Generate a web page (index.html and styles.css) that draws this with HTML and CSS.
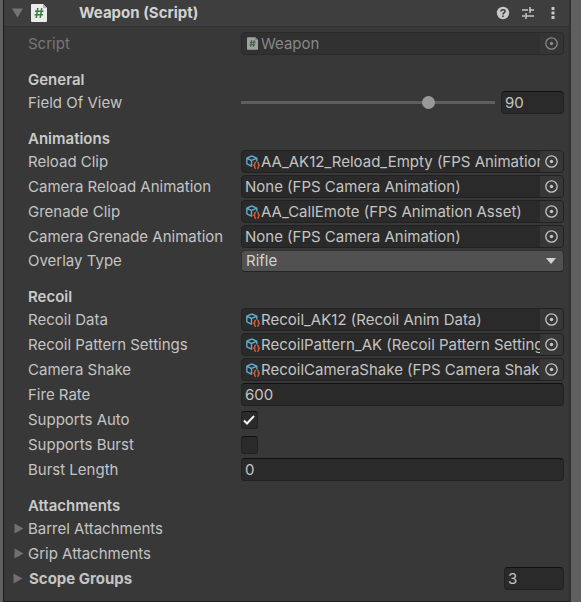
FILE: index.html
```html
<!DOCTYPE html>
<html lang="en">
<head>
<meta charset="utf-8">
<title>Weapon (Script)</title>
<link rel="stylesheet" href="styles.css">
</head>
<body>
<svg class="defs" aria-hidden="true">
  <symbol id="script-icon" viewBox="0 0 16 18">
    <path d="M1 0H12L16 4V17Q16 18 15 18H1Q0 18 0 17V1Q0 0 1 0Z" fill="#ececec"/>
    <path d="M12 0V4H16Z" fill="#b4b4b4"/>
    <path d="M6.800 4L5.300 14M10.700 4L9.200 14M4 7.200H12.500M3.500 10.800H12" fill="none" stroke="#3b7c3e" stroke-width="1.500"/>
  </symbol>
  <symbol id="asset-icon" viewBox="0 0 14 14">
    <path d="M5.800 1L10.800 3.200V6.500M5.800 1L.8 3.200V8.800L5.500 11.200V5.500L.8 3.200M5.500 5.500L10.800 3.200" fill="none" stroke="#5fa9cb" stroke-width="1.400" stroke-linejoin="round"/>
    <path d="M10 7.200Q8.700 7.200 8.700 8.500V9.400L7.700 10.200L8.700 11V12Q8.700 13.300 10 13.300M11.200 7.200Q12.500 7.200 12.500 8.500V9.400L13.400 10.200L12.500 11V12Q12.500 13.300 11.200 13.300" fill="none" stroke="#d6572f" stroke-width="1.500"/>
  </symbol>
  <symbol id="pick-icon" viewBox="0 0 14 14">
    <circle cx="6.500" cy="6.500" r="5.700" fill="none" stroke="currentColor" stroke-width="1.300"/>
    <circle cx="6.500" cy="6.500" r="1.700" fill="currentColor"/>
  </symbol>
  <symbol id="arrow-right" viewBox="0 0 10 12"><path d="M.5 .5L9.500 5.500L.5 10.500Z" fill="currentColor"/></symbol>
</svg>

<main class="inspector">
  <header class="component-header">
    <button class="icon-button fold" aria-label="Collapse component"><svg width="12" height="10" viewBox="0 0 12 10"><path d="M0 .5H11L5.500 9.500Z" fill="currentColor"/></svg></button>
    <svg class="script-logo" width="16" height="18"><use href="#script-icon"/></svg>
    <h1>Weapon (Script)</h1>
    <div class="header-actions">
      <button class="icon-button" aria-label="Help"><svg width="14" height="14" viewBox="0 0 14 14"><circle cx="7" cy="7" r="6.200" fill="currentColor"/><path d="M5 5.500Q5 3.700 7 3.700Q9 3.700 9 5.300Q9 6.200 8 6.800Q7 7.300 7 8.500M7 9.500V11" fill="none" stroke="#3e3e3e" stroke-width="1.600"/></svg></button>
      <button class="icon-button" aria-label="Presets"><svg width="14" height="14" viewBox="0 0 14 14"><path d="M1 4H7M8 4H13M9 1V7M1 10H4M5 10H13M5 7V13" fill="none" stroke="currentColor" stroke-width="1.500"/></svg></button>
      <button class="icon-button" aria-label="More"><svg width="14" height="14" viewBox="0 0 14 14"><path d="M5.500 1H8.500V4H5.500ZM5.500 5.500H8.500V8.500H5.500ZM5.500 10H8.500V13H5.500Z" fill="currentColor"/></svg></button>
    </div>
  </header>

  <form class="properties">
    <section class="group">
      <div class="row disabled">
        <label for="script">Script</label>
        <div class="box object"><svg class="small-script" width="11" height="13"><use href="#script-icon"/></svg><input id="script" value="Weapon" disabled><button type="button" class="pick" disabled aria-label="Select script"><svg width="14" height="14"><use href="#pick-icon"/></svg></button></div>
      </div>
    </section>

    <section class="group">
      <h2>General</h2>
      <div class="row">
        <label for="fov">Field Of View</label>
        <div class="slider"><input id="fov" type="range" min="0" max="120" value="90"><input class="box number" aria-label="Field Of View value" value="90"></div>
      </div>
    </section>

    <section class="group">
      <h2>Animations</h2>
      <div class="row">
        <label for="reload">Reload Clip</label>
        <div class="box object"><svg class="asset" width="14" height="14"><use href="#asset-icon"/></svg><input id="reload" readonly value="AA_AK12_Reload_Empty (FPS Animation Asset)"><button type="button" class="pick" aria-label="Select reload clip"><svg width="14" height="14"><use href="#pick-icon"/></svg></button></div>
      </div>
      <div class="row">
        <label for="camera-reload">Camera Reload Animation</label>
        <div class="box object"><input id="camera-reload" readonly value="None (FPS Camera Animation)"><button type="button" class="pick" aria-label="Select camera reload animation"><svg width="14" height="14"><use href="#pick-icon"/></svg></button></div>
      </div>
      <div class="row">
        <label for="grenade">Grenade Clip</label>
        <div class="box object"><svg class="asset" width="14" height="14"><use href="#asset-icon"/></svg><input id="grenade" readonly value="AA_CallEmote (FPS Animation Asset)"><button type="button" class="pick" aria-label="Select grenade clip"><svg width="14" height="14"><use href="#pick-icon"/></svg></button></div>
      </div>
      <div class="row">
        <label for="camera-grenade">Camera Grenade Animation</label>
        <div class="box object"><input id="camera-grenade" readonly value="None (FPS Camera Animation)"><button type="button" class="pick" aria-label="Select camera grenade animation"><svg width="14" height="14"><use href="#pick-icon"/></svg></button></div>
      </div>
      <div class="row row-dropdown">
        <label for="overlay">Overlay Type</label>
        <div class="dropdown"><select id="overlay"><option>Rifle</option></select><svg width="10" height="6" viewBox="0 0 10 6" aria-hidden="true"><path d="M0 0H10L5 6Z" fill="currentColor"/></svg></div>
      </div>
    </section>

    <section class="group">
      <h2>Recoil</h2>
      <div class="row">
        <label for="recoil">Recoil Data</label>
        <div class="box object"><svg class="asset" width="14" height="14"><use href="#asset-icon"/></svg><input id="recoil" readonly value="Recoil_AK12 (Recoil Anim Data)"><button type="button" class="pick" aria-label="Select recoil data"><svg width="14" height="14"><use href="#pick-icon"/></svg></button></div>
      </div>
      <div class="row">
        <label for="pattern">Recoil Pattern Settings</label>
        <div class="box object"><svg class="asset" width="14" height="14"><use href="#asset-icon"/></svg><input id="pattern" readonly value="RecoilPattern_AK (Recoil Pattern Settings)"><button type="button" class="pick" aria-label="Select recoil pattern"><svg width="14" height="14"><use href="#pick-icon"/></svg></button></div>
      </div>
      <div class="row">
        <label for="shake">Camera Shake</label>
        <div class="box object"><svg class="asset" width="14" height="14"><use href="#asset-icon"/></svg><input id="shake" readonly value="RecoilCameraShake (FPS Camera Shake)"><button type="button" class="pick" aria-label="Select camera shake"><svg width="14" height="14"><use href="#pick-icon"/></svg></button></div>
      </div>
      <div class="row">
        <label for="rate">Fire Rate</label>
        <input class="box" id="rate" value="600">
      </div>
      <div class="row">
        <label for="auto">Supports Auto</label>
        <div class="check"><input id="auto" type="checkbox" checked><svg width="12" height="10" viewBox="0 0 12 10" aria-hidden="true"><path d="M1 5.500L4 8.500L11 1" fill="none" stroke="currentColor" stroke-width="2"/></svg></div>
      </div>
      <div class="row">
        <label for="burst">Supports Burst</label>
        <div class="check"><input id="burst" type="checkbox"><svg width="12" height="10" viewBox="0 0 12 10" aria-hidden="true"><path d="M1 5.500L4 8.500L11 1" fill="none" stroke="currentColor" stroke-width="2"/></svg></div>
      </div>
      <div class="row">
        <label for="length">Burst Length</label>
        <input class="box" id="length" value="0">
      </div>
    </section>

    <section class="group">
      <h2>Attachments</h2>
      <div class="foldout"><button type="button"><svg width="10" height="12"><use href="#arrow-right"/></svg>Barrel Attachments</button></div>
      <div class="foldout"><button type="button"><svg width="10" height="12"><use href="#arrow-right"/></svg>Grip Attachments</button></div>
      <div class="foldout strong"><button type="button"><svg width="10" height="12"><use href="#arrow-right"/></svg>Scope Groups</button><input class="box count" aria-label="Scope Groups size" value="3"></div>
    </section>
  </form>
</main>
</body>
</html>
```
FILE: styles.css
```css
* { box-sizing: border-box; }

body {
  margin: 0;
  background: #5f5f5f;
  color: #c4c4c4;
  font: 15px/22px Inter, "Liberation Sans", sans-serif;
}

.defs { position: absolute; width: 0; height: 0; }
svg { display: block; flex: none; }

input, select, button {
  margin: 0;
  padding: 0;
  border: 0;
  background: none;
  color: inherit;
  font: inherit;
}

h1, h2 { margin: 0; font-size: 15px; line-height: 22px; font-weight: 600; }

.inspector {
  margin: 0 10px 0 3px;
  background: #383838;
  border: solid #1d1d1d;
  border-width: 0 0 1px 1px;
  border-right: 2px solid #303030;
}

.component-header {
  display: flex;
  align-items: center;
  height: 27px;
  padding: 0 9px 0 8px;
  background: #3e3e3e;
  border-bottom: 1px solid #303030;
}
.component-header h1 { flex: 1; margin-left: 32px; color: #d2d2d2; font-weight: 700; }
.script-logo { margin-left: 7px; }
.icon-button { color: #c8c8c8; }
.fold { color: #747474; }
.header-actions { display: flex; gap: 11px; }

.properties { padding: 5px 5px 11px 8px; }
.group { display: flex; flex-direction: column; gap: 2px; }
.group + .group { margin-top: 14px; }
.group h2 { margin: 0 0 -2px 16px; color: #cacaca; }

.row {
  display: grid;
  grid-template-columns: 213px minmax(0, 1fr);
  align-items: center;
  height: 23px;
  padding-left: 16px;
}
.row label { white-space: nowrap; }
.row-dropdown { height: 22px; }

.box {
  width: 100%;
  height: 23px;
  padding: 0 3px;
  background: #2a2a2a;
  border: 1px solid #212121;
  border-top-color: #101010;
  border-radius: 4px;
}

.object {
  display: flex;
  align-items: center;
  padding-right: 0;
  border-top-color: #212121;
  overflow: hidden;
}
.object input { flex: 1; min-width: 0; height: 21px; }
.asset { margin: 0 1px; }
.small-script { margin: 0 3px 0 2px; }
.pick {
  display: flex;
  align-items: center;
  justify-content: center;
  width: 23px;
  height: 21px;
  background: #373737;
}

.disabled { color: #777; }
.disabled .object { background: #313131; border-color: #2a2a2a; color: #888; }
.disabled .pick { background: #353535; }
.small-script { opacity: .6; }

.slider { display: flex; align-items: center; gap: 6px; }
.slider input[type="range"] {
  flex: 1;
  min-width: 0;
  height: 13px;
  appearance: none;
  background: linear-gradient(#5e5e5e, #5e5e5e) center / 100% 3px no-repeat;
}
.slider input[type="range"]::-webkit-slider-thumb {
  appearance: none;
  width: 13px;
  height: 13px;
  border-radius: 50%;
  background: #999;
}
.slider .number { width: 63px; }

.dropdown { position: relative; color: #d2d2d2; }
.dropdown select {
  display: block;
  width: 100%;
  height: 22px;
  padding: 0 4px;
  appearance: none;
  background: #515151;
  border: 1px solid #303030;
  border-bottom-color: #242424;
  border-radius: 4px;
  line-height: 20px;
}
.dropdown svg { position: absolute; top: 8px; right: 8px; pointer-events: none; }

.check { position: relative; width: 17px; height: 18px; color: #f0f0f0; }
.check input {
  display: block;
  width: 17px;
  height: 18px;
  appearance: none;
  background: #2a2a2a;
  border: 1px solid #212121;
  border-top-color: #101010;
  border-radius: 3px;
}
.check svg { position: absolute; top: 4px; left: 2px; visibility: hidden; }
.check input:checked + svg { visibility: visible; }

.foldout { display: flex; align-items: center; justify-content: space-between; height: 23px; padding-left: 2px; }
.foldout button { display: flex; align-items: center; gap: 4px; }
.foldout svg { color: #707070; }
.strong { padding-left: 1px; }
.strong button { gap: 6px; font-weight: 700; }
.count { width: 60px; }
```
